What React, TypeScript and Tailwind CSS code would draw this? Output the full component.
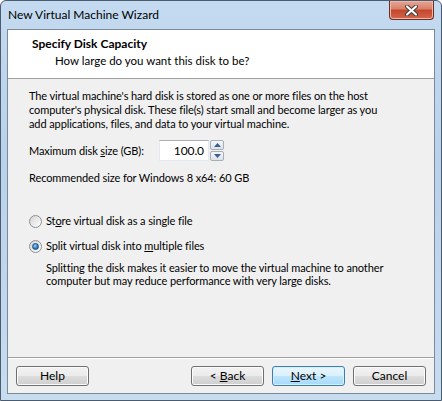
import { ReactNode } from "react";

function WinButton({ children, primary, className }: { children: ReactNode; primary?: boolean; className?: string }) {
  return (
    <div
      className={
        "flex h-[20px] w-[73px] items-center justify-center whitespace-pre rounded-[3px] border text-[12px] text-black " +
        (primary
          ? "border-[#3c7fb1] bg-[linear-gradient(#eaf6fd_0%,#d9f0fc_50%,#bee6fd_50%,#a7d9f5_100%)] shadow-[inset_0_0_0_1px_#d6efff]"
          : "border-[#707070] bg-[linear-gradient(#f2f2f2_0%,#ebebeb_50%,#dddddd_50%,#cfcfcf_100%)] shadow-[inset_0_0_0_1px_#fcfcfc]") +
        " " +
        (className ?? "")
      }
    >
      {children}
    </div>
  );
}

function Radio({ checked }: { checked?: boolean }) {
  return (
    <div className="flex h-[13px] w-[13px] shrink-0 items-center justify-center rounded-full border border-[#8e8f8f] bg-[linear-gradient(135deg,#d4d4d4,#ffffff)]">
      {checked && (
        <div className="h-[7px] w-[7px] rounded-full border border-[#1b4f80] bg-[radial-gradient(circle_at_40%_35%,#9ad2f7,#2c79c0_60%,#194a7c)]" />
      )}
    </div>
  );
}

export default function App() {
  return (
    <div
      className="flex h-[401px] w-[442px] flex-col overflow-hidden rounded-t-[6px] border border-[#4a5c70] bg-[linear-gradient(180deg,#c3daf0_0%,#b9d1ea_40%,#c8dcf0_100%)] text-[12px] text-black"
      style={{ fontFamily: 'Lato, "Noto Sans", "Liberation Sans", sans-serif' }}
    >
      {/* title bar */}
      <div className="flex h-[28px] shrink-0 items-start justify-between">
        <div className="pl-[7px] pt-[6px] text-[12px] leading-[16px] text-black">New Virtual Machine Wizard</div>
        <div className="mr-[7px] flex h-[19px] w-[45px] items-center justify-center rounded-b-[4px] border border-t-0 border-[#6b2d25] bg-[linear-gradient(#e8a493_0%,#d7806a_45%,#c3462c_50%,#d3674c_100%)] shadow-[inset_0_0_0_1px_#eeb7a8]">
          <svg width="13" height="11" viewBox="0 0 13 11">
            <path d="M2 1.5 L11 9.5 M11 1.5 L2 9.5" stroke="#3b3b3b" strokeWidth="4" strokeLinecap="round" />
            <path d="M2 1.5 L11 9.5 M11 1.5 L2 9.5" stroke="#ffffff" strokeWidth="2.2" strokeLinecap="round" />
          </svg>
        </div>
      </div>

      {/* client */}
      <div className="mx-[6px] flex h-[365px] flex-col border border-[#7a8a9a] bg-[#f0f0f0]">
        <div className="h-[49px] shrink-0 border-b border-[#a0a0a0] bg-white pl-[24px] pt-[6px]">
          <div className="text-[12px] font-bold leading-[16px]">Specify Disk Capacity</div>
          <div className="pl-[23px] pt-[1px] text-[11.5px] leading-[16px]">How large do you want this disk to be?</div>
        </div>

        <div className="flex flex-1 flex-col whitespace-nowrap px-[21px] pt-[10px] text-[11px] leading-[14px] tracking-[-0.1px]">
          <p>
            The virtual machine's hard disk is stored as one or more files on the host
            <br />
            computer's physical disk. These file(s) start small and become larger as you
            <br />
            add applications, files, and data to your virtual machine.
          </p>

          <div className="mt-[9px] flex items-center">
            <span className="w-[130px]">
              Maximum disk <span className="underline">s</span>ize (GB):
            </span>
            <div className="flex h-[21px] w-[50px] items-center justify-end border border-[#e3e9ef] border-t-[#abadb3] bg-white pr-[4px] text-[12px]">
              100.0
            </div>
            <div className="ml-[1px] flex h-[21px] w-[14px] flex-col gap-[1px]">
              <div className="flex flex-1 items-center justify-center rounded-[2px] border border-[#a6aeb6] bg-[linear-gradient(#f4f6f8,#dde3ea)]">
                <svg width="7" height="4" viewBox="0 0 7 4"><path d="M0 4 L3.5 0 L7 4 Z" fill="#3b5f8c" /></svg>
              </div>
              <div className="flex flex-1 items-center justify-center rounded-[2px] border border-[#a6aeb6] bg-[linear-gradient(#f4f6f8,#dde3ea)]">
                <svg width="7" height="4" viewBox="0 0 7 4"><path d="M0 0 L7 0 L3.5 4 Z" fill="#3b5f8c" /></svg>
              </div>
            </div>
          </div>

          <div className="mt-[10px]">Recommended size for Windows 8 x64: 60 GB</div>

          <div className="mt-[29px] flex items-center gap-[4px]">
            <Radio />
            <span>
              St<span className="underline">o</span>re virtual disk as a single file
            </span>
          </div>
          <div className="mt-[11px] flex items-center gap-[4px]">
            <Radio checked />
            <span>
              Split virtual disk into <span className="underline">m</span>ultiple files
            </span>
          </div>
          <p className="mt-[8px] pl-[17px] leading-[13px]">
            Splitting the disk makes it easier to move the virtual machine to another
            <br />
            computer but may reduce performance with very large disks.
          </p>
        </div>

        <div className="h-[2px] shrink-0 border-t border-b border-t-[#a0a0a0] border-b-white" />
        <div className="flex h-[34px] shrink-0 items-start px-[8px] pt-[7px]">
          <WinButton>Help</WinButton>
          <div className="flex-1" />
          <WinButton>
            {"< "}
            <span className="underline">B</span>ack
          </WinButton>
          <WinButton primary className="ml-[8px]">
            <span className="underline">N</span>
            {"ext >"}
          </WinButton>
          <WinButton className="ml-[8px]">Cancel</WinButton>
        </div>
      </div>
    </div>
  );
}
